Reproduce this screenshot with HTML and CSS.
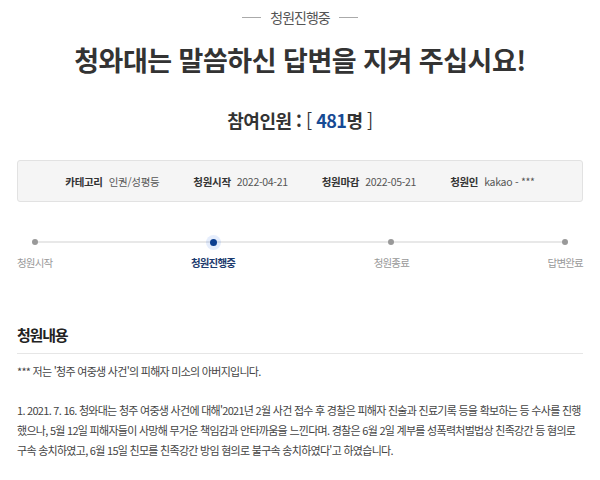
FILE: index.html
```html
<!DOCTYPE html>
<html lang="ko">
<head>
    <meta charset="UTF-8">
    <meta name="viewport" content="width=device-width, initial-scale=1.0">
    <title>청원진행중</title>
    <link rel="stylesheet" href="styles.css">
</head>
<body>
    <div class="petition">
        <div class="status-tag">청원진행중</div>
        <h1 class="title">청와대는 말씀하신 답변을 지켜 주십시요!</h1>
        <div class="count">참여인원 : <span class="bracket">[</span> <span class="num">481</span>명 <span class="bracket">]</span></div>

        <ul class="info">
            <li><b>카테고리</b>인권/성평등</li>
            <li><b>청원시작</b>2022-04-21</li>
            <li><b>청원마감</b>2022-05-21</li>
            <li><b>청원인</b>kakao - ***</li>
        </ul>

        <ol class="steps">
            <li class="step"><i class="dot"></i>청원시작</li>
            <li class="step active"><i class="dot"></i>청원진행중</li>
            <li class="step"><i class="dot"></i>청원종료</li>
            <li class="step"><i class="dot"></i>답변완료</li>
        </ol>

        <h2 class="section-title">청원내용</h2>
        <div class="content">
            <p>*** 저는 '청주 여중생 사건'의 피해자 미소의 아버지입니다.</p>
            <p>1. 2021. 7. 16. 청와대는 청주 여중생 사건에 대해'2021년 2월 사건 접수 후 경찰은 피해자 진술과 진료기록 등을 확보하는 등 수사를 진행했으나, 5월 12일 피해자들이 사망해 무거운 책임감과 안타까움을 느낀다며. 경찰은 6월 2일 계부를 성폭력처벌법상 친족강간 등 혐의로 구속 송치하였고, 6월 15일 친모를 친족강간 방임 혐의로 불구속 송치하였다'고 하였습니다.</p>
        </div>
    </div>
</body>
</html>
```

FILE: styles.css
```css
body {
    margin: 0;
    background: #fff;
    color: #333;
    font-family: "Noto Sans CJK KR", "Noto Sans", sans-serif;
}
.petition {
    padding: 0 17px;
}
.status-tag {
    display: flex;
    align-items: center;
    justify-content: center;
    gap: 9px;
    height: 34px;
    font-size: 14px;
    letter-spacing: -1px;
    color: #555;
}
.status-tag::before,
.status-tag::after {
    content: "";
    width: 19px;
    height: 1px;
    background: #aaa;
}
.title {
    margin: 0;
    font-size: 27px;
    line-height: 52px;
    letter-spacing: -0.5px;
    text-align: center;
    color: #333;
}
.count {
    margin-top: 20px;
    font-size: 18px;
    line-height: 28px;
    font-weight: bold;
    letter-spacing: -0.5px;
    text-align: center;
    color: #333;
}
.count .bracket {
    font-weight: normal;
}
.count .num {
    color: #174a94;
}
.info {
    display: flex;
    justify-content: center;
    align-items: center;
    gap: 34px;
    margin: 26px 0 0;
    padding: 0;
    list-style: none;
    height: 40px;
    background: #f5f5f5;
    border: 1px solid #e2e2e2;
    border-radius: 3px;
    font-size: 10.5px;
    letter-spacing: -0.3px;
    color: #555;
}
.info b {
    margin-right: 6px;
    color: #333;
}
.steps {
    display: flex;
    justify-content: space-between;
    margin: 33px 0 0;
    padding: 0;
    list-style: none;
    background: linear-gradient(#e8e8e8, #e8e8e8) no-repeat;
    background-size: calc(100% - 38px) 2px;
    background-position: 19px 6px;
}
.step {
    display: flex;
    flex-direction: column;
    align-items: center;
    font-size: 10.5px;
    line-height: 16px;
    letter-spacing: -0.8px;
    color: #999;
}
.dot {
    display: block;
    width: 6px;
    height: 6px;
    margin: 4px 0 10px;
    border-radius: 50%;
    background: #999;
}
.step.active {
    color: #1d3b6e;
    font-weight: bold;
}
.step.active .dot {
    width: 7px;
    height: 7px;
    margin: 3.5px 0 9.5px;
    background: #0d3f8f;
    box-shadow: 0 0 0 4px rgba(40, 110, 230, 0.12);
}
.section-title {
    margin: 52px 0 0;
    padding-bottom: 6px;
    border-bottom: 1px solid #e6e6e6;
    font-size: 15px;
    line-height: 24px;
    letter-spacing: -1.2px;
    color: #222;
}
.content {
    padding-top: 7px;
    font-size: 11px;
    line-height: 20px;
    letter-spacing: -0.72px;
    color: #444;
}
.content p {
    margin: 0 0 19px;
}
```
